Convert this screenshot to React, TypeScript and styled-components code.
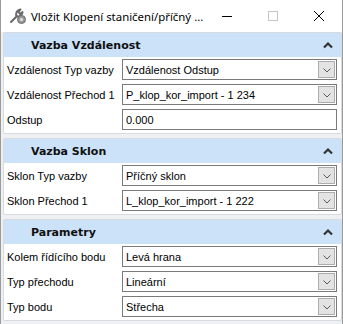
import React from "react";
import styled, { createGlobalStyle } from "styled-components";

const GlobalStyle = createGlobalStyle`
  html, body { margin: 0; padding: 0; background: #ffffff; }
  body { font-family: "Liberation Sans", Arial, sans-serif; }
  * { box-sizing: border-box; }
`;

const Window = styled.div`
  width: 343px;
  height: 324px;
  background: #eef0f2;
  border-left: 1px solid #9a9a9a;
  border-right: 1px solid #9a9a9a;
  display: flex;
  flex-direction: column;
  overflow: hidden;
`;

const TitleBar = styled.div`
  height: 32px;
  flex: 0 0 32px;
  background: #ffffff;
  display: flex;
  align-items: center;
  padding-left: 8px;
`;

const AppIcon = styled.svg`
  width: 18px;
  height: 18px;
  flex: 0 0 18px;
`;

const Title = styled.div`
  font-family: "Noto Sans", "Open Sans", sans-serif;
  font-size: 11.4px;
  color: #000;
  margin-left: 4px;
  flex: 1;
  white-space: nowrap;
`;

const Controls = styled.div`
  display: flex;
  height: 32px;
`;

const CtrlButton = styled.div`
  width: 46px;
  height: 32px;
  display: flex;
  align-items: center;
  justify-content: center;
`;

const Content = styled.div`
  flex: 1;
  display: flex;
  flex-direction: column;
  gap: 4px;
  padding: 0 0 0 2px;
`;

const Section = styled.div`
  background: #ffffff;
  border: 1px solid #d6dbe1;
  border-radius: 2px;
`;

const SectionHeader = styled.div`
  height: 24px;
  background: #cce2f8;
  display: flex;
  align-items: center;
  justify-content: space-between;
  padding: 0 8px 0 27px;
  font-family: "DejaVu Sans", Verdana, sans-serif;
  font-weight: bold;
  font-size: 11px;
  color: #101010;
`;

const SectionBody = styled.div`
  display: flex;
  flex-direction: column;
  gap: 4px;
  padding: 2px 4px 3px 3px;
`;

const Row = styled.div`
  display: grid;
  grid-template-columns: 115px 1fr;
  align-items: center;
  height: 21px;
`;

const Label = styled.div`
  font-size: 11px;
  color: #000;
  white-space: nowrap;
`;

const Field = styled.div`
  height: 21px;
  border: 1px solid #7a7a7a;
  background: #fff;
  display: flex;
  align-items: center;
  padding-left: 3px;
  font-size: 11px;
  color: #000;
`;

const FieldText = styled.span`
  flex: 1;
  white-space: nowrap;
`;

const DropButton = styled.div`
  width: 17px;
  height: 17px;
  margin-right: 1px;
  background: #e3e3e3;
  border: 1px solid #adadad;
  display: flex;
  align-items: center;
  justify-content: center;
`;

const Chevron = () => (
  <svg width="12" height="12" viewBox="0 0 12 12">
    <path d="M2.5 4.5 L6 8 L9.5 4.5" fill="none" stroke="#5a5a5a" strokeWidth="1" />
  </svg>
);

const CollapseIcon = () => (
  <svg width="10" height="8" viewBox="0 0 10 8">
    <path d="M1 6.5 L5 2.5 L9 6.5" fill="none" stroke="#333" strokeWidth="2.2" />
  </svg>
);

const Combo = ({ value }: { value: string }) => (
  <Field>
    <FieldText>{value}</FieldText>
    <DropButton>
      <Chevron />
    </DropButton>
  </Field>
);

const TextBox = ({ value }: { value: string }) => (
  <Field>
    <FieldText>{value}</FieldText>
  </Field>
);

type RowDef = { label: string; value: string; kind?: "combo" | "text" };

const SectionBlock = ({ title, rows }: { title: string; rows: RowDef[] }) => (
  <Section>
    <SectionHeader>
      <span>{title}</span>
      <CollapseIcon />
    </SectionHeader>
    <SectionBody>
      {rows.map((r) => (
        <Row key={r.label}>
          <Label>{r.label}</Label>
          {r.kind === "text" ? <TextBox value={r.value} /> : <Combo value={r.value} />}
        </Row>
      ))}
    </SectionBody>
  </Section>
);

export default function App() {
  return (
    <>
      <GlobalStyle />
      <Window>
        <TitleBar>
          <AppIcon viewBox="0 0 18 18">
            <path
              d="M2 15 L8 9 M7.5 9.5 C6.5 7 7.5 4 10 3 L11.5 2.5 L9.5 5 L11 7 L13.5 5 C13.5 8 11 10 8.5 9.5"
              fill="none"
              stroke="#6a6a6a"
              strokeWidth="2"
              strokeLinecap="round"
              strokeLinejoin="round"
            />
            <circle cx="12.5" cy="12.5" r="4" fill="#9a9a9a" stroke="#6a6a6a" strokeWidth="1" />
            <circle cx="12.5" cy="12.5" r="1.6" fill="#e0e0e0" />
          </AppIcon>
          <Title>Vložit Klopení staničení/příčný ...</Title>
          <Controls>
            <CtrlButton>
              <svg width="12" height="12" viewBox="0 0 12 12">
                <path d="M1 6.5 H11" stroke="#000" strokeWidth="1" />
              </svg>
            </CtrlButton>
            <CtrlButton>
              <svg width="12" height="12" viewBox="0 0 12 12">
                <rect x="1.5" y="1.5" width="9" height="9" fill="none" stroke="#c4c4c4" strokeWidth="1" />
              </svg>
            </CtrlButton>
            <CtrlButton>
              <svg width="12" height="12" viewBox="0 0 12 12">
                <path d="M1 1 L11 11 M11 1 L1 11" stroke="#000" strokeWidth="1" />
              </svg>
            </CtrlButton>
          </Controls>
        </TitleBar>
        <Content>
          <SectionBlock
            title="Vazba Vzdálenost"
            rows={[
              { label: "Vzdálenost Typ vazby", value: "Vzdálenost Odstup" },
              { label: "Vzdálenost Přechod 1", value: "P_klop_kor_import - 1 234" },
              { label: "Odstup", value: "0.000", kind: "text" },
            ]}
          />
          <SectionBlock
            title="Vazba Sklon"
            rows={[
              { label: "Sklon Typ vazby", value: "Příčný sklon" },
              { label: "Sklon Přechod 1", value: "L_klop_kor_import - 1 222" },
            ]}
          />
          <SectionBlock
            title="Parametry"
            rows={[
              { label: "Kolem řídícího bodu", value: "Levá hrana" },
              { label: "Typ přechodu", value: "Lineární" },
              { label: "Typ bodu", value: "Střecha" },
            ]}
          />
        </Content>
      </Window>
    </>
  );
}
